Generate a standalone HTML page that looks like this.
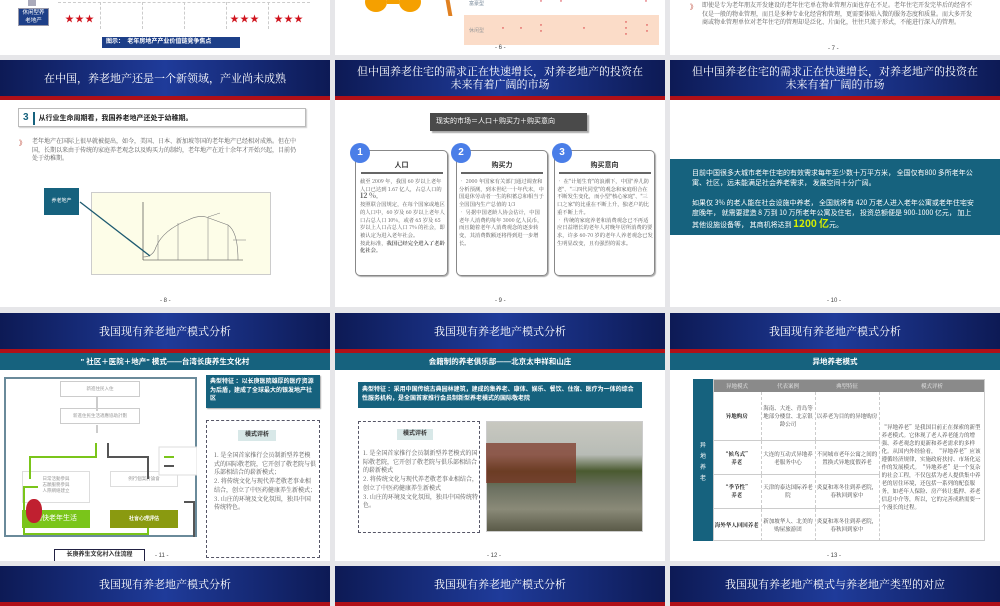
<!DOCTYPE html>
<html><head><meta charset="utf-8"><style>
*{margin:0;padding:0;box-sizing:border-box}
body{width:1000px;height:600px;background:#e6e6e9;position:relative;overflow:hidden;font-family:"Liberation Sans","Noto Sans CJK SC",sans-serif;color:#333}
.s{position:absolute;background:#fff;overflow:hidden}
.a{position:absolute}
.hd{position:absolute;left:0;right:0;top:0;height:40px;background:linear-gradient(90deg,#0d1a55 0%,#1f3b9a 50%,#0d1a55 100%);border-bottom:4px solid #b01018;color:#fff;font-family:"Noto Serif CJK SC","Liberation Serif",serif;font-size:11px;text-align:center;display:flex;align-items:center;justify-content:center;line-height:13px}
.sub{position:absolute;left:0;right:0;top:40px;height:17px;background:#16627e;color:#fff;font-size:7.5px;text-align:center;line-height:17px;font-weight:bold}
.pg{position:absolute;font-size:6px;color:#444}
.t{font-size:6px;line-height:8.5px;color:#555;font-family:"Noto Serif CJK SC",serif}
.teal{background:#16627e;color:#fff}
.star{color:#d0141e;font-size:9px;letter-spacing:1px}
</style></head><body>

<!-- top row -->
<div class="s" style="left:0;top:0;width:330px;height:55px">
 <div class="a" style="left:28px;top:0;width:8px;height:6px;background:#aab"></div>
 <div class="a teal" style="left:18px;top:8px;width:31px;height:18px;background:#1d3f88;font-size:5.5px;line-height:8px;text-align:center;border:1px solid #99a">休闲型养<br>老地产</div>
 <div class="a" style="left:58px;top:2px;width:252px;border-top:1px dashed #ccc"></div>
 <div class="a" style="left:100px;top:2px;height:27px;border-left:1px dashed #ccc"></div>
 <div class="a" style="left:142px;top:2px;height:27px;border-left:1px dashed #ccc"></div>
 <div class="a" style="left:184px;top:2px;height:27px;border-left:1px dashed #ccc"></div>
 <div class="a" style="left:226px;top:2px;height:27px;border-left:1px dashed #ccc"></div>
 <div class="a" style="left:268px;top:2px;height:27px;border-left:1px dashed #ccc"></div>
 <div class="a star" style="left:65px;top:12px">★★★</div>
 <div class="a star" style="left:230px;top:12px">★★★</div>
 <div class="a star" style="left:274px;top:12px">★★★</div>
 <div class="a" style="left:102px;top:37px;width:138px;height:11px;background:#1d3f88;color:#fff;font-size:6px;line-height:11px;padding-left:4px;font-weight:bold">图示：&nbsp;&nbsp;老年房地产产业价值链竞争焦点</div>
</div>
<div class="s" style="left:335px;top:0;width:330px;height:55px">
 <div class="a" style="left:30px;top:-8px;width:22px;height:20px;border-radius:50%;background:#f5a000"></div>
 <div class="a" style="left:52px;top:0;width:12px;height:4px;background:#f5a000"></div>
 <div class="a" style="left:64px;top:-8px;width:22px;height:20px;border-radius:50%;background:#f5a000"></div>
 <div class="a" style="left:112px;top:0;width:4px;height:16px;background:#e08020;transform:skewX(10deg)"></div>
 <div class="a" style="left:129px;top:15px;width:195px;height:30px;background:#fbdcc8"></div>
 <div class="a" style="left:134px;top:0;font-size:5px;color:#789">富豪型</div>
 <div class="a" style="left:134px;top:27px;font-size:5px;color:#999">休闲型</div>
 <div class="a" style="left:205px;top:0;color:#d0141e;font-size:5px">*</div>
 <div class="a" style="left:225px;top:0;color:#d0141e;font-size:5px">*</div>
 <div class="a" style="left:310px;top:0;color:#d0141e;font-size:5px">*</div>
 <div class="a" style="left:167px;top:27px;color:#d0141e;font-size:5px">*</div>
 <div class="a" style="left:185px;top:27px;color:#d0141e;font-size:5px">*</div>
 <div class="a" style="left:205px;top:24px;color:#d0141e;font-size:5px;line-height:6px">*<br>*</div>
 <div class="a" style="left:248px;top:27px;color:#d0141e;font-size:5px">*</div>
 <div class="a" style="left:290px;top:21px;color:#d0141e;font-size:5px;line-height:6px">*<br>*<br>*</div>
 <div class="a" style="left:311px;top:24px;color:#d0141e;font-size:5px;line-height:6px">*<br>*</div>
 <div class="pg" style="left:160px;top:45px">- 6 -</div>
</div>
<div class="s" style="left:670px;top:0;width:330px;height:55px">
 <div class="a" style="left:20px;top:2px;color:#b43;font-size:7px">》</div>
 <div class="a t" style="left:32px;top:1px;width:270px">即使是专为老年朋友开发建设的老年住宅单在物业管理方面也存在不足。老年住宅开发完毕后的经营不仅是一般的物业管理，而且是多种专业化经营和管理，更需要体贴入微的服务态度和质量。而大多开发商或物业管理单位对老年住宅的管理却是泛化、片面化，往往只流于形式，不能进行深入的管理。</div>
 <div class="pg" style="left:158px;top:46px">- 7 -</div>
</div>

<!-- row 2 -->
<div class="s" style="left:0;top:60px;width:330px;height:247px">
 <div class="hd">在中国，养老地产还是一个新领域，产业尚未成熟</div>
 <div class="a" style="left:18px;top:48px;width:288px;height:19px;border:1px solid #bbb;box-shadow:1px 1px 1px #ccc;font-size:7px;font-weight:bold;line-height:17px;padding-left:4px;color:#222"><span style="color:#16627e;font-size:10px">3</span><span style="display:inline-block;width:2px;height:13px;background:#16627e;margin:0 4px;vertical-align:middle"></span>从行业生命周期看，我国养老地产还处于幼稚期。</div>
 <div class="a" style="left:19px;top:78px;color:#b43;font-size:7px">》</div>
 <div class="a t" style="left:32px;top:77px;width:265px">老年地产在国际上很早就被提出，如今，美国、日本、新加坡等国的老年地产已经相对成熟。但在中国，长期以来由于传统的家庭养老观念以及购买力的制约，老年地产在近十余年才开始兴起，目前仍处于幼稚期。</div>
 <div class="a teal" style="left:44px;top:128px;width:35px;height:27px;font-size:5px;line-height:27px;text-align:center">养老地产</div>
 <div class="a" style="left:91px;top:132px;width:180px;height:83px;background:#fdfde8;border:1px solid #ccc"></div>
 <svg class="a" style="left:78px;top:130px" width="200" height="90"><line x1="65" y1="12" x2="65" y2="70" stroke="#333" stroke-width=".6"/><line x1="65" y1="70" x2="165" y2="70" stroke="#333" stroke-width=".6"/><path d="M65 67 Q75 67 78 57 Q85 40 110 30 Q120 25 128 27 L150 35 Q160 42 160 70" fill="none" stroke="#777" stroke-width=".6"/><line x1="2" y1="12" x2="72" y2="66" stroke="#1d5a70" stroke-width="1.3"/><g stroke="#777" stroke-width=".5"><line x1="80" y1="45" x2="80" y2="70"/><line x1="100" y1="33" x2="100" y2="70"/><line x1="130" y1="27" x2="130" y2="70"/><line x1="150" y1="35" x2="150" y2="70"/><line x1="130" y1="27" x2="142" y2="23"/><line x1="155" y1="50" x2="168" y2="50"/></g></svg>
 <div class="pg" style="left:160px;top:238px">- 8 -</div>
</div>
<div class="s" style="left:335px;top:60px;width:330px;height:247px">
 <div class="hd">但中国养老住宅的需求正在快速增长，对养老地产的投资在<br>未来有着广阔的市场</div>
 <div class="a" style="left:95px;top:53px;width:157px;height:18px;background:#4a4a4a;color:#fff;font-size:7px;line-height:18px;padding-left:6px;box-shadow:2px 2px 1px #aaa">现实的市场＝人口＋购买力＋购买意向</div>
 <div class="a" style="left:20px;top:90px;width:93px;height:126px;border:1px solid #888;border-radius:5px;box-shadow:1px 1px 1px #aaa"></div>
 <div class="a" style="left:121px;top:90px;width:92px;height:126px;border:1px solid #888;border-radius:5px;box-shadow:1px 1px 1px #aaa"></div>
 <div class="a" style="left:219px;top:90px;width:101px;height:126px;border:1px solid #888;border-radius:5px;box-shadow:1px 1px 1px #aaa"></div>
 <div class="a" style="left:15px;top:83px;width:20px;height:20px;border-radius:50%;background:#4a7ee8;color:#fff;font-size:10px;font-weight:bold;text-align:center;line-height:20px">1</div>
 <div class="a" style="left:116px;top:83px;width:20px;height:20px;border-radius:50%;background:#4a7ee8;color:#fff;font-size:10px;font-weight:bold;text-align:center;line-height:20px">2</div>
 <div class="a" style="left:217px;top:83px;width:20px;height:20px;border-radius:50%;background:#4a7ee8;color:#fff;font-size:10px;font-weight:bold;text-align:center;line-height:20px">3</div>
 <div class="a" style="left:20px;top:100px;width:93px;text-align:center;font-size:7px;font-weight:bold">人口</div>
 <div class="a" style="left:121px;top:100px;width:92px;text-align:center;font-size:7px;font-weight:bold">购买力</div>
 <div class="a" style="left:219px;top:100px;width:101px;text-align:center;font-size:7px;font-weight:bold">购买意向</div>
 <div class="a" style="left:26px;top:112px;width:82px;height:2px;background:#666"></div>
 <div class="a" style="left:126px;top:112px;width:82px;height:2px;background:#666"></div>
 <div class="a" style="left:224px;top:112px;width:92px;height:2px;background:#666"></div>
 <div class="a t" style="left:25px;top:118px;width:86px;font-size:5.3px;line-height:7.7px;height:96px;overflow:hidden">截至 2009 年，我国 60 岁以上老年人口已达到 1.67 亿人，占总人口的 <b style="font-size:7px">12 %</b>。<br>按照联合国规定，在每个国家或地区的人口中，60 岁及 60 岁以上老年人口占总人口 10%，或者 65 岁及 65 岁以上人口占总人口 7% 的社会，即被认定为进入老年社会。<br>按此标准，<b>我国已经完全进入了老龄化社会。</b></div>
 <div class="a t" style="left:124px;top:118px;width:86px;font-size:5.3px;line-height:7.7px;height:96px;overflow:hidden">• 2000 年国家有关部门通过调查和分析预测，到本世纪一十年代末，中国退休劳动者一生的积蓄总和相当于全国国内生产总值的 1/3<br>• 另据中国老龄人协会估计，中国老年人消费约每年 3000 亿人民币，而且随着老年人消费观念的逐步转变，其消费数额还将得到进一步增长。</div>
 <div class="a t" style="left:222px;top:118px;width:96px;font-size:5.3px;line-height:7.7px;height:96px;overflow:hidden">• 在"计划生育"的浪潮下，中国"养儿防老"、"三四代同堂"的观念和家庭组合在不断发生变化，而小型"核心家庭"、"三口之家"的比重在不断上升，独老户的比重不断上升。<br>• 传统的家庭养老和消费观念已不再适应日益增长的老年人对晚年居所消费的要求，许多 60-70 岁的老年人养老观念已发生明显改变，且有强烈的需求。</div>
 <div class="pg" style="left:160px;top:238px">- 9 -</div>
</div>
<div class="s" style="left:670px;top:60px;width:330px;height:247px">
 <div class="hd">但中国养老住宅的需求正在快速增长，对养老地产的投资在<br>未来有着广阔的市场</div>
 <div class="a teal" style="left:0;top:99px;width:330px;height:76px;font-size:7px;line-height:10px;padding:9px 22px;font-family:'Noto Sans CJK SC',sans-serif">目前中国很多大城市老年住宅的有效需求每年至少数十万平方米， 全国仅有800 多所老年公寓、社区，远未能满足社会养老需求， 发展空间十分广阔。<br><br style="line-height:4px">如果仅 3% 的老人能在社会设施中养老， 全国就将有 420 万老人进入老年公寓或老年住宅安度晚年， 就需要建造 8 万到 10 万所老年公寓及住宅， 投资总额便是 900-1000 亿元， 加上其他设施设备等， 其商机将达到 <b style="color:#d8f000;font-size:10px">1200 亿</b>元。</div>
 <div class="pg" style="left:157px;top:238px">- 10 -</div>
</div>

<!-- row 3 -->
<div class="s" style="left:0;top:313px;width:330px;height:248px">
 <div class="hd">我国现有养老地产模式分析</div>
 <div class="sub">" 社区＋医院＋地产" 模式——台湾长庚养生文化村</div>
 <div class="a" style="left:4px;top:64px;width:193px;height:160px;border:2px solid #6a8a9a"></div>
 <div class="a" style="left:60px;top:68px;width:80px;height:16px;border:1px solid #ccc;font-size:4.5px;color:#999;text-align:center;line-height:14px">新進住民入住</div>
 <div class="a" style="left:60px;top:95px;width:80px;height:16px;border:1px solid #ccc;font-size:4.5px;color:#999;text-align:center;line-height:14px">新進住民生活適應協助計劃</div>
 <div class="a" style="left:22px;top:158px;width:68px;height:32px;border:1px solid #ddd;font-size:4.5px;color:#999;text-align:center;line-height:6px;padding-top:4px">日常活動參與<br>志願服務參與<br>人際網絡建立</div>
 <div class="a" style="left:110px;top:158px;width:68px;height:16px;border:1px solid #ddd;font-size:4.5px;color:#999;text-align:center;line-height:14px">例行個案討論會</div>
 <div class="a" style="left:22px;top:197px;width:68px;height:18px;background:#7ac51a;color:#fff;font-size:7px;text-align:center;line-height:18px">愉快老年生活</div>
 <div class="a" style="left:110px;top:197px;width:68px;height:18px;background:#8a9a10;color:#fff;font-size:5px;text-align:center;line-height:18px;font-weight:bold">社會心理評估</div>
 <div class="a" style="left:26px;top:186px;width:16px;height:24px;border-radius:45%;background:#c02030"></div>
 <svg class="a" style="left:4px;top:64px" width="193" height="160"><path d="M93 20 v14 M93 48 v8" stroke="#ccc" stroke-width="2"/><path d="M92 66 v14 h-66 v22" fill="none" stroke="#7ac51a" stroke-width="2"/><path d="M104 66 v14 h40 v22" fill="none" stroke="#555" stroke-width="2"/><path d="M20 150 v7 h124 v-6 M20 150 v-40 h14" fill="none" stroke="#7ac51a" stroke-width="2"/><path d="M180 125 h10 v60" fill="none" stroke="#555" stroke-width="2"/><rect x="155" y="70" width="38" height="28" fill="#fff" stroke="#ddd"/><path d="M160 80 h10 M160 89 h10" stroke="#7ac51a" stroke-width="2"/><path d="M160 89 h10" stroke="#555" stroke-width="2"/></svg>
 <div class="a teal" style="left:206px;top:62px;width:114px;height:33px;font-size:6px;line-height:8.5px;padding:3px 4px;font-weight:bold;box-shadow:1px 1px 1px #aaa">典型特征 ：以长庚医院雄厚的医疗资源为后盾，建成了全球最大的银发地产社区</div>
 <div class="a" style="left:206px;top:107px;width:114px;height:138px;border:1px dashed #556"></div>
 <div class="a" style="left:238px;top:117px;width:38px;height:11px;background:#d8e8e8;font-size:6px;font-weight:bold;text-align:center;line-height:11px">模式评析</div>
 <div class="a t" style="left:214px;top:138px;width:102px;font-size:6px;line-height:8.7px">1. 是全国首家推行会员制新型养老模式的国际敬老院，它开创了敬老院与俱乐部相结合的崭新模式；<br>2. 将传统文化与现代养老敬老事业相结合，创立了中医药健康养生新模式；<br>3. 山庄的环境及文化氛围，独具中国传统特色。</div>
 <div class="a" style="left:54px;top:236px;width:91px;height:13px;border:1px solid #224;font-size:6px;font-weight:bold;text-align:center;line-height:11px">长庚养生文化村入住流程</div>
 <div class="pg" style="left:155px;top:240px">- 11 -</div>
</div>
<div class="s" style="left:335px;top:313px;width:330px;height:248px">
 <div class="hd">我国现有养老地产模式分析</div>
 <div class="sub">会籍制的养老俱乐部——北京太申祥和山庄</div>
 <div class="a teal" style="left:23px;top:69px;width:284px;height:26px;font-size:6px;line-height:8.5px;padding:4px 4px;font-weight:bold">典型特征 ：采用中国传统古典园林建筑，建成的集养老、康体、娱乐、餐饮、住宿、医疗为一体的综合性服务机构，是全国首家推行会员制新型养老模式的国际敬老院</div>
 <div class="a" style="left:23px;top:108px;width:122px;height:112px;border:1px dashed #556"></div>
 <div class="a" style="left:62px;top:116px;width:36px;height:11px;background:#d8e8e8;font-size:6px;font-weight:bold;text-align:center;line-height:11px">模式评析</div>
 <div class="a t" style="left:28px;top:136px;width:115px;font-size:6px;line-height:8.7px">1. 是全国首家推行会员制新型养老模式的国际敬老院，它开创了敬老院与俱乐部相结合的崭新模式<br>2. 将传统文化与现代养老敬老事业相结合，创立了中医药健康养生新模式<br>3. 山庄的环境及文化氛围，独具中国传统特色。</div>
 <div class="a" style="left:151px;top:108px;width:157px;height:111px;background:linear-gradient(180deg,#c8c8c0 0%,#b8bcb6 30%,#4a5a30 45%,#6b7060 60%,#8a8a78 80%,#5a5a48 100%);border:1px solid #ccc"></div>
 <div class="a" style="left:151px;top:130px;width:90px;height:40px;background:#7a3020;opacity:.7"></div>
 <div class="pg" style="left:152px;top:240px">- 12 -</div>
</div>
<div class="s" style="left:670px;top:313px;width:330px;height:248px">
 <div class="hd">我国现有养老地产模式分析</div>
 <div class="sub">异地养老模式</div>
 <div class="a teal" style="left:23px;top:66px;width:20px;height:162px;font-size:6px;text-align:center;line-height:11px;padding-top:62px">异<br>地<br>养<br>老</div>
 <table class="a" style="left:43px;top:66px;width:272px;height:162px;border-collapse:collapse;font-size:5.5px;line-height:8px;text-align:center;font-family:'Noto Serif CJK SC',serif;color:#444">
  <tr style="background:#8a8a8a;color:#eee;height:13px"><td style="width:48px">异地模式</td><td style="width:54px">代表案例</td><td style="width:64px">典型特征</td><td>模式评析</td></tr>
  <tr style="border-bottom:1px solid #ccc"><td style="font-weight:bold;color:#222;border-right:1px dashed #ccc">异地购房</td><td style="border-right:1px dashed #ccc">海南、大连、青岛等地部分楼盘、北京银龄公司</td><td style="border-right:1px dashed #ccc">以养老为目的的异地购房</td><td rowspan="4" style="text-align:left;padding:2px">“异地养老”是我国目前正在探索的新型养老模式。它体现了老人养老能力的增强、养老观念的更新和养老需求的多样化。从国内外经验看，“异地养老”应该遵循经济规律，实施政府扶持、市场化运作的发展模式。“异地养老”是一个复杂的社会工程，不仅包括为老人提供集中养老的居住环境，还包括一系列的配套服务，如老年人保险、房产转让抵押、养老信息中介等，所以，它的完善成熟需要一个漫长的过程。</td></tr>
  <tr style="border-bottom:1px solid #ccc"><td style="font-weight:bold;color:#222;border-right:1px dashed #ccc">“候鸟式”<br>养老</td><td style="border-right:1px dashed #ccc">大连的互动式异地养老服务中心</td><td style="border-right:1px dashed #ccc">不同城市老年公寓之间的置换式异地度假养老</td></tr>
  <tr style="border-bottom:1px solid #ccc"><td style="font-weight:bold;color:#222;border-right:1px dashed #ccc">“季节性”<br>养老</td><td style="border-right:1px dashed #ccc">天津的泰达国际养老院</td><td style="border-right:1px dashed #ccc">炎夏和寒冬住到养老院，春秋回到家中</td></tr>
  <tr><td style="font-weight:bold;color:#222;border-right:1px dashed #ccc">海外华人回国养老</td><td style="border-right:1px dashed #ccc">新加坡华人、北美的购屋旅游团</td><td style="border-right:1px dashed #ccc">炎夏和寒冬住到养老院，春秋回到家中</td></tr>
 </table>
 <div class="a" style="left:43px;top:66px;width:272px;height:162px;border:1px solid #ccc;pointer-events:none"></div>
 <div class="pg" style="left:157px;top:240px">- 13 -</div>
</div>

<!-- row 4 -->
<div class="s" style="left:0;top:566px;width:330px;height:40px"><div class="hd">我国现有养老地产模式分析</div></div>
<div class="s" style="left:335px;top:566px;width:330px;height:40px"><div class="hd">我国现有养老地产模式分析</div></div>
<div class="s" style="left:670px;top:566px;width:330px;height:40px"><div class="hd">我国现有养老地产模式与养老地产类型的对应</div></div>
</body></html>
